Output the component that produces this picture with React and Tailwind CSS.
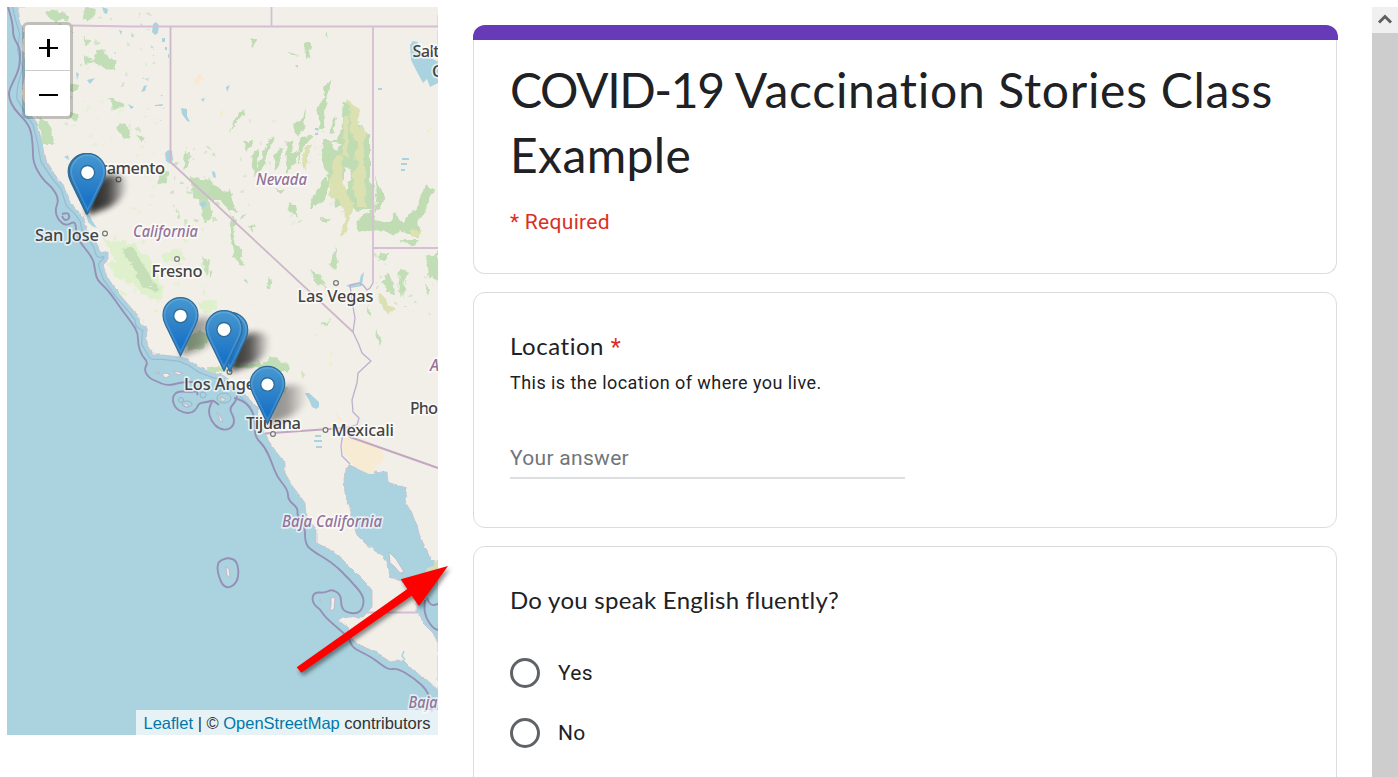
import React from "react";

const COAST =
  "M17 7L20 20 24 33 22 50 27 68 22 87 21 97 30 113 37 123 42 143 45 160 55 175 65 187 70 203 78 211 84 219 86 228 92 236 98 246 100 253 108 251 108 260 103 265 107 277 120 295 133 310 139 318 140 324 147 328 146 343 153 355 163 355 180 357 190 361 200 368 213 373 222 375 228 378 228 385 237 387 250 400 257 407 260 420 265 433 270 443 277 453 285 463 285 473 293 487 297 492 305 503 306 517 317 530 317 543 333 552 343 560 353 570 365 582 372 590 372 607 363 617 343 617 338 620 348 628 353 640 363 647 377 652 390 662 403 660 413 670 427 680 438 690V643L433 633 423 623 417 612 417 603 407 583 398 580 390 577 388 563 380 553 367 545 357 535 353 523 350 507 345 493 344 480 345 472 350 465 360 470 370 474 374 471 387 473 388 482 407 488 405 500 412 513 417 527 423 543 432 560 438 562V7Z";

const LIMITS = [
  "8 7 13 23 13 37 20 48 20 62 18 72 9 90 9 98 14 109 25 120 31 130 33 147 33 163 43 180 52 187 59 199 55 210 58 220 66 226 75 221 76 229 78 240 93 258 95 270 97 280 108 290 122 310 132 323 138 333 138 345 142 356 148 362 144 370 149 378 156 381 167 386 183 382 193 382",
  "234 398 243 400 253 411 255 425 255 437 265 447 272 463 277 477 288 490 288 500 298 508 297 516 305 526 305 541 309 549 333 563 350 580 364 596 363 608 357 614 345 612 341 606 341 595 332 589 325 593 315 592 312 598 314 605 320 609 325 617 340 630 349 638 352 647 361 652 373 658 388 670 397 668 414 678 429 692 432 712",
  "425 600 424 608 426 618 433 628 438 630",
  "427 598 430 606 438 604",
  "197 395 199 391 190 392 177 391 172 398 175 408 184 413 192 413 197 408 199 403 208 402 213 400 219 405",
  "212 402 208 409 211 421 219 429 228 430 234 425 234 417 229 409 236 401 237 396",
  "228 558 219 560 217 568 219 577 223 586 230 588 237 582 239 571 236 560 228 558",
  "62 214 68 212 70 218 65 221 62 216",
];

// Runs a curve through the midpoints of a list of points.
function smooth(list) {
  const n = list.split(" ").map(Number);
  let d = `M${n[0]} ${n[1]}`;
  for (let i = 2; i < n.length - 2; i += 2) {
    d += `Q${n[i]} ${n[i + 1]} ${(n[i] + n[i + 2]) / 2} ${(n[i + 1] + n[i + 3]) / 2}`;
  }
  return `${d}L${n[n.length - 2]} ${n[n.length - 1]}`;
}

// Vegetation outlines are given at three times the map scale, per quadrant.
const GREEN_NW =
  "M115 350L145 365 160 410 155 435 125 435 120 390ZM285 155L310 150 325 180 350 180 345 210 325 212 300 195 280 185ZM325 290L345 300 375 308 370 322 340 330ZM355 370L380 375 395 410 375 420 355 395ZM140 30L200 38 205 60 165 65 140 50ZM255 25L285 25 280 55 245 62ZM555 455L570 460 565 500 550 510ZM480 510L505 515 500 550 475 550ZM570 530L640 545 650 580 625 600 640 650 615 670 600 600 580 590ZM210 340L235 340 235 362 215 362ZM250 170L275 170 280 190 255 190ZM250 110L275 120 260 140ZM210 250L235 255 230 270 212 270ZM412 405L435 415 420 430ZM390 100L400 105 392 112Z";
const GREEN_NE =
  "M398 305L420 310 430 345 455 380 480 410 480 540 495 570 490 630 440 635 420 610 375 620 370 580 355 530 335 480 340 420 380 420 395 380ZM440 660L490 630 495 660 540 670 555 640 580 670 600 640 620 630 630 590 645 560 672 570 650 610 650 640 625 660 630 710 570 690 550 710 520 690 440 695ZM283 125L300 120 298 175 285 180ZM233 155L262 165 245 168ZM255 195L270 195 262 208ZM345 250L365 240 350 290 342 330 345 370 325 400 330 350 320 330 338 300ZM100 325L105 345 75 365 60 398 65 370ZM285 320L280 385 265 410 245 375 275 360ZM230 425L250 425 245 460 265 450 255 485 235 520 230 480ZM180 415L195 420 170 460 160 505 130 530 145 490ZM205 440L215 445 210 500 190 515 195 470ZM105 420L130 420 110 460ZM270 415L310 410 280 430 270 480 260 500ZM130 460L145 450 138 525 125 500ZM345 530L360 545 345 600 300 625 315 580ZM495 525L510 560 525 600 495 640 500 580ZM370 350L380 350 370 400 358 400ZM235 605L255 615 260 655 245 635ZM0 530L10 555 40 575 60 570 70 600 85 640 55 630 30 600 0 600ZM60 645L80 660 70 690 90 760 92 790 80 780 65 720ZM95 650L110 640 95 660ZM110 675L135 680 125 697ZM330 655L360 655 350 670ZM684 740L684 790 660 790ZM500 770L540 755 520 785ZM200 565L220 565 210 580ZM345 95L355 100 350 112ZM125 120L140 115 125 150Z";
const GREEN_SE =
  "M70 20L90 30 95 60 110 80 95 80 75 50ZM295 90L335 105 345 130 325 140ZM375 15L385 60 375 90 362 75ZM650 50L684 40 684 120 660 110 650 80ZM505 60L510 40 535 40 520 55ZM530 90L550 130 558 165 530 155 520 130ZM570 90L595 95 580 130 590 150 575 175 565 150ZM500 260L515 300 510 315 500 290ZM470 200L485 210 485 240ZM570 0L630 0 610 20ZM645 130L660 150 650 165ZM175 110L185 115 180 150 172 150ZM60 375L170 365 185 350 240 375 225 400 180 395 160 380 65 385ZM200 420L232 445 228 460 205 450ZM0 385L60 380 40 395 0 395ZM330 250L360 240 350 255ZM100 120L118 125 110 133ZM0 90L8 95 0 115Z";
const GREEN_SW =
  "M370 25L395 25 430 70 455 120 480 145 465 155 430 140 400 90 375 50ZM560 290L600 270 640 290 600 330 565 330ZM610 55L630 65 620 110 612 95ZM620 385L660 380 660 395 625 395Z";
const PALE_SW =
  "M310 0L400 10 450 60 490 150 480 185 440 170 390 130 340 110 320 70 350 65ZM595 185L650 180 650 210 620 222 600 205ZM480 45L530 25 560 60 500 65Z";

const LABELS = [
  { t: "Sacramento", x: 76, y: 173.5, w: 89 },
  { t: "San Jose", x: 35, y: 241, w: 64 },
  { t: "Fresno", x: 151.5, y: 276.5, w: 51 },
  { t: "Las Vegas", x: 297.5, y: 302, w: 76 },
  { t: "Los Angeles", x: 184, y: 390, w: 93 },
  { t: "Tijuana", x: 246, y: 429, w: 55 },
  { t: "Mexicali", x: 331.5, y: 435.5, w: 62.5 },
  { t: "Salt", x: 412.5, y: 56.5, w: 27 },
  { t: "C", x: 432, y: 77, w: 10 },
  { t: "Pho", x: 410, y: 414, w: 28 },
];

const REGIONS = [
  { t: "Nevada", x: 256, y: 185, w: 51 },
  { t: "California", x: 133, y: 237, w: 65 },
  { t: "Baja California", x: 282, y: 527, w: 100 },
  { t: "A", x: 430, y: 371, w: 9 },
  { t: "Baja", x: 408.5, y: 708, w: 29 },
];

const TOWNS = [[118.5, 179.5], [105, 233.5], [177, 259], [336, 283], [229.5, 372], [273, 434], [325.5, 430]];

const PINS = [
  { x: 86.3, y: 214.5, s: 1.5, shade: 0.45 },
  { x: 87.6, y: 214.5, s: 1.5, shade: 0.7 },
  { x: 180.5, y: 356.5, s: 1.45, shade: 0.42 },
  { x: 230, y: 372, s: 1.47, shade: 0.8 },
  { x: 224, y: 371.5, s: 1.5, shade: 0 },
  { x: 267.5, y: 424.5, s: 1.43, shade: 0.42 },
];

// Small deterministic scatter for ground cover.
function scatter(seed, n, x0, y0, w, h, size) {
  let s = seed;
  const rnd = () => {
    s = (s * 16807) % 2147483647;
    return s / 2147483647;
  };
  return Array.from({ length: n }, () => ({
    x: x0 + rnd() * w,
    y: y0 + rnd() * h,
    rx: 0.5 + rnd() * size,
    ry: 0.5 + rnd() * size,
  }));
}

const SPECKS = [
  { c: "#d3e5c9", d: scatter(41, 40, 50, 12, 105, 120, 1.4) },
  { c: "#e6f0d8", d: scatter(97, 50, 70, 100, 90, 120, 2) },
  { c: "#b9dae2", d: scatter(7, 12, 75, 20, 95, 110, 0.9) },
  { c: "#cfe3c3", d: scatter(313, 34, 172, 145, 50, 80, 1.7) },
  { c: "#d9e6d0", d: scatter(505, 22, 240, 110, 110, 115, 1.2) },
  { c: "#e2f0d0", d: scatter(77, 44, 115, 225, 90, 100, 2.2) },
  { c: "#eeeed9", d: scatter(811, 20, 215, 270, 130, 140, 1) },
  { c: "#d3e4c8", d: scatter(631, 18, 375, 255, 62, 60, 1.4) },
];

function Pin({ x, y, s }) {
  return (
    <g transform={`translate(${x - 12.5 * s} ${y - 41 * s}) scale(${s})`}>
      <path
        d="M12.5.4C5.8.4.4 5.8.4 12.5c0 2.5.8 4.7 1.8 6.8L12.5 40.6l10.300-21.300c1-2.100 1.800-4.300 1.800-6.800C24.600 5.800 19.200.4 12.500.4Z"
        fill="url(#pinFill)"
        stroke="#2e6c97"
        strokeWidth=".8"
      />
      <path
        d="M12.500 1.500C6.400 1.500 1.500 6.400 1.500 12.500c0 2.300.8 4.400 1.700 6.300L12.500 38l9.300-19.200c.9-1.900 1.700-4 1.700-6.300 0-6.100-4.900-11-11-11Z"
        fill="none"
        stroke="#fff"
        strokeOpacity=".14"
        strokeWidth="1.100"
      />
      <circle cx="12.500" cy="13" r="4.700" fill="#fff" stroke="#2e6c97" strokeWidth=".9" />
    </g>
  );
}

function MapCanvas() {
  return (
    <svg className="block h-[728px] w-[431px]" viewBox="7 7 431 728" aria-label="Map">
      <defs>
        <linearGradient id="pinFill" x1="0" y1="0" x2="0" y2="1">
          <stop offset="0" stopColor="#4699d2" />
          <stop offset=".35" stopColor="#3587c9" />
          <stop offset=".8" stopColor="#1873c8" />
          <stop offset="1" stopColor="#2578c0" />
        </linearGradient>
        <linearGradient id="shadeFill" x1="0" y1="0" x2="1" y2="0">
          <stop offset="0" stopColor="#000" />
          <stop offset=".5" stopColor="#000" stopOpacity=".8" />
          <stop offset="1" stopColor="#000" stopOpacity="0" />
        </linearGradient>
        <filter id="rough" x="-5%" y="-5%" width="110%" height="110%">
          <feTurbulence type="fractalNoise" baseFrequency=".13" numOctaves="3" seed="4" />
          <feDisplacementMap in="SourceGraphic" scale="7" xChannelSelector="R" yChannelSelector="G" />
          <feGaussianBlur stdDeviation=".6" />
        </filter>
        <filter id="shoreline" x="-5%" y="-5%" width="110%" height="110%">
          <feTurbulence type="fractalNoise" baseFrequency=".16" numOctaves="2" seed="9" />
          <feDisplacementMap in="SourceGraphic" scale="3.500" xChannelSelector="R" yChannelSelector="G" />
          <feGaussianBlur stdDeviation=".35" />
        </filter>
        <filter id="soft" x="-50%" y="-50%" width="200%" height="200%">
          <feGaussianBlur stdDeviation="3.200" />
        </filter>
        <filter id="line" x="-5%" y="-5%" width="110%" height="110%">
          <feGaussianBlur stdDeviation=".4" />
        </filter>
        <clipPath id="land">
          <path d={COAST} />
        </clipPath>
        <clipPath id="north">
          <rect x="7" y="7" width="420" height="400" />
        </clipPath>
      </defs>
      <rect x="7" y="7" width="431" height="728" fill="#aad3df" />

      <g clipPath="url(#north)">
        <g filter="url(#line)">
          <path d={COAST} fill="none" stroke="#93b2d0" strokeOpacity=".75" strokeWidth="10" strokeLinejoin="round" />
          <path d={COAST} fill="#aad3df" stroke="#aad3df" strokeWidth="7.500" strokeLinejoin="round" />
        </g>
      </g>
      <path d={COAST} fill="#f2efe9" stroke="#c3bfd0" strokeWidth=".8" filter="url(#shoreline)" />
      <rect x="431" y="80" width="7" height="480" fill="#f2efe9" />
      <rect x="25" y="7" width="413" height="8" fill="#f2efe9" />

      <g clipPath="url(#land)">
        <g filter="url(#rough)">
          <g transform="translate(0 240) scale(.33333)">
            <path d={PALE_SW} fill="#dff0cc" />
            <path d={GREEN_SW} fill="#c5dfb8" />
          </g>
          {SPECKS.map((g, i) => (
            <g key={i} fill={g.c}>
              {g.d.map((p, j) => (
                <ellipse key={j} cx={p.x} cy={p.y} rx={p.rx} ry={p.ry} />
              ))}
            </g>
          ))}
          <path transform="scale(.33333)" d={GREEN_NW} fill="#c2deb6" />
          <g transform="translate(210 0) scale(.33333)">
            <path d={GREEN_NE} fill="#bfdcb3" />
            <path
              d="M408 300L445 325 445 375 468 395 460 430 465 480 465 570 470 625 445 620 435 580 425 530 445 490 430 470 445 430 420 400 425 345ZM375 470L395 460 395 520 405 560 420 600 430 610 410 700 398 705 405 650 390 600 355 590 360 550ZM285 435L305 435 295 475 285 510 275 490ZM400 350L418 350 415 480 400 470ZM605 690L635 690 625 710 605 705Z"
              fill="#dbe1b0"
            />
            <path d="M365 425L395 430 380 455 365 450ZM405 500L425 510 410 570 400 560Z" fill="#f2efe9" />
            <path d="M650 390L665 385 655 402ZM30 325L42 335 32 350Z" fill="#f6ecc4" />
          </g>
          <g transform="translate(210 240) scale(.33333)">
            <path d={GREEN_SE} fill="#c2deb6" />
            <path d="M500 165L525 170 555 210 535 225 505 190ZM280 390L290 400 280 420ZM335 125L350 140 340 150Z" fill="#dbe1b5" />
            <path d="M365 500L400 545 385 535ZM355 365L365 370 358 388ZM315 280L325 285 318 290ZM360 335L375 337 362 342Z" fill="#f7e8c6" />
          </g>
          <path d="M193 80L202 73 204 78 197 84ZM22 87L26 97 23 100Z" fill="#f7ead0" />
        </g>
        <g fill="#aad3df" filter="url(#line)">
          <path d="M153 24L156 22 159 25 158 33 155 35 152 32ZM181 108L187 109 187 116 190 122 187 121 182 114ZM165 153L168 150 172 151 173 160 170 164 166 161ZM144 86L147 85 145 91 141 92ZM87 80L95 78 90 84ZM128 104L134 107 131 109ZM155 105L163 104 162 106 155 106ZM162 38L165 38 165 42 162 42ZM168 54h1v4h-1zM165 47h2v3h-2zM201 99L205 98 203 102ZM199 204L204 201 207 204 203 208ZM212 171L215 172 216 178 213 177ZM102 7L108 9 107 14 104 13ZM119 30L122 31 121 35ZM64 157L68 155 69 160ZM76 72L79 74 77 80Z" />
          <path d="M410 45L413 41 418 42 420 58 430 57 438 62V83L430 87 427 79 423 83 416 70 411 60Z" />
          <path d="M305 393L309 393 319 402 319 407 316 409 312 407 309 400ZM346 285L362 284 362 286 350 288ZM361 275L364 272 362 285 359 284ZM226 87L230 85 227 92ZM86 213L90 216 93 222 97 228 92 226 88 222Z" />
        </g>
        <path d="M402 159h7M401 164h6M401 170h4M315 129h3M315 134h3M378 89h4M315 436h6M314 441h8M316 447h6" stroke="#aad3df" strokeWidth="2.200" />
        <path d="M404 651L402 656 405 660" stroke="#aad3df" strokeWidth="1.500" fill="none" />
      </g>
      <path d="M344 438L366 440 374 445 384 452 383 461 375 466 374 474 369 474 358 469 351 463 343 451Z" fill="#f7ebd3" filter="url(#line)" />

      <g fill="none" stroke="#d6bfd4" strokeWidth="1.800" strokeLinejoin="round" filter="url(#line)">
        <path d="M72 25.500L130 26.500H438M271.500 7V26M373 27V283M373 248H438M365 612.500H417" />
        <path d="M170.500 27V162L353 332" stroke="#cdb8ca" />
        <path
          d="M373 283L370 288 367 290 363 285 359 283 350 285 351 293 353 307 355 318 353 332 359 345 362 353 371 361 358 373 357 383 352 400 353 412 359 418 357 425 344 428 341 446 342 456 350 464"
          stroke="#bcb0cd"
          strokeWidth="1.300"
        />
        <path d="M265 433.500L315 430 344 428 350 437 438 468" stroke="#c2a7c2" strokeWidth="2.200" />
      </g>

      <g fill="none" stroke="#9690b6" strokeWidth="1.900" strokeLinejoin="round" filter="url(#line)">
        {LIMITS.map((l) => (
          <path key={l} d={smooth(l)} />
        ))}
      </g>
      <g fill="none" stroke="#93b2d0" strokeWidth="1" filter="url(#line)">
        <circle cx="181" cy="400" r="2.500" />
        <circle cx="203" cy="395" r="3" />
        <ellipse cx="224" cy="398" rx="7" ry="5" />
        <ellipse cx="187" cy="404" rx="5" ry="3" />
      </g>
      <g fill="#f2efe9" stroke="#bbb2c6" strokeWidth=".8">
        <path d="M155 372l5 1-4 1zM162 374l5-1 3 3-5 2zM173 371l10 2-5 2zM182 402l7 4-3 1zM217 412l6 9h-3zM226 567l3 2 1 9-3-3zM331 598l4-1-1 12-4 2 1-6zM389 552l7 7 8 13-4 1-6-7-4-3zM319 600h2v2z" />
        <path d="M220 397l6 2-4 3z" fill="#deedc6" />
      </g>
      <path d="M427 568L434 566V561H438V575L426 573Z" fill="#d3dfb6" />

      <g fill="#f4f2ed" stroke="#777" strokeWidth="1.200">
        {TOWNS.map(([x, y]) => (
          <circle key={x} cx={x} cy={y} r="2.400" />
        ))}
      </g>
      <g
        className="font-['Noto_Sans',sans-serif] text-[16.5px] font-medium"
        fill="#444"
        stroke="#fff"
        strokeOpacity=".65"
        strokeWidth="3.500"
        strokeLinejoin="round"
        paintOrder="stroke"
      >
        {LABELS.map((l) => (
          <text key={l.t} x={l.x} y={l.y} textLength={l.w}>
            {l.t}
          </text>
        ))}
      </g>
      <g
        className="font-['Noto_Sans',sans-serif] text-[15.5px] font-medium italic"
        fill="#93739a"
        stroke="#fff"
        strokeOpacity=".65"
        strokeWidth="3.500"
        strokeLinejoin="round"
        paintOrder="stroke"
      >
        {REGIONS.map((l) => (
          <text key={l.t} x={l.x} y={l.y} textLength={l.w} lengthAdjust="spacingAndGlyphs">
            {l.t}
          </text>
        ))}
      </g>

      {PINS.map((p, i) => (
        <path
          key={i}
          d="M0 0L4-24C8-38 26-44 38-36 44-28 36-14 20-7Z"
          transform={`translate(${p.x} ${p.y})`}
          fill="url(#shadeFill)"
          opacity={p.shade}
          filter="url(#soft)"
        />
      ))}
      {PINS.map((p, i) => (
        <Pin key={i} {...p} />
      ))}
    </svg>
  );
}

function ZoomControl() {
  return (
    <div className="absolute top-[15px] left-[15px] flex w-[51px] flex-col overflow-hidden rounded-[6px] border-3 border-black/20 bg-white bg-clip-padding">
      <button aria-label="Zoom in" className="flex h-[46px] items-center justify-center border-b border-[#ccc]">
        <svg className="ml-[2px] h-5 w-5" viewBox="0 0 20 20" shapeRendering="crispEdges">
          <path d="M0 9h19v2H0zM8 1h3v18H8z" />
        </svg>
      </button>
      <button aria-label="Zoom out" className="flex h-[45px] items-center justify-center">
        <svg className="ml-[2px] h-5 w-5" viewBox="0 0 20 20" shapeRendering="crispEdges">
          <path d="M0 10h19v2H0z" />
        </svg>
      </button>
    </div>
  );
}

function MapPanel() {
  return (
    <section className="relative mt-[7px] ml-[7px] h-[728px] w-[431px] shrink-0">
      <MapCanvas />
      <ZoomControl />
      <div className="absolute right-0 bottom-0 h-[25px] w-[302px] bg-white/70 pl-[7.5px] font-['Liberation_Sans',Arial,sans-serif] text-[16.5px] leading-[26px] whitespace-nowrap text-[#333]">
        <a className="text-[#0078a8]">Leaflet</a> | © <a className="text-[#0078a8]">OpenStreetMap</a> contributors
      </div>
      <svg
        className="absolute top-[545px] left-[280px] h-[135px] w-[175px] drop-shadow-[2px_3px_2px_rgba(0,0,0,0.45)]"
        viewBox="287 552 175 135"
      >
        <path d="M448 566L400.700 579.300 407.300 589 296.700 667.300 301.300 672.700 411.700 595.700 419 606Z" fill="#f00" />
      </svg>
    </section>
  );
}

function Option({ label }) {
  return (
    <label className="flex h-[30px] items-center gap-[18px] text-[21px] tracking-[0.3px] text-[#202124]">
      <span className="h-[30px] w-[30px] rounded-full border-3 border-[#5f6368]" />
      <span className="pt-[2px]">{label}</span>
    </label>
  );
}

function FormPanel() {
  return (
    <main className="ml-[35px] flex w-[865px] shrink-0 flex-col pt-[25px] font-[Roboto,sans-serif] text-[#202124]">
      <div className="h-[15px] w-[865px] shrink-0 rounded-t-[12px] bg-[#673ab7]" />
      <section className="h-[234px] w-[864px] shrink-0 rounded-b-[12px] border border-t-0 border-[#dadce0] px-9 pt-[17px]">
        <h1 className="font-[Lato,sans-serif] text-[48px] leading-[65px] tracking-[0.7px] whitespace-nowrap [font-variant-ligatures:none]">
          <span className="tracking-[-1.4px]">COVID-19</span> Vaccination Stories Class
          <br />
          <span className="tracking-[0.4px]">Example</span>
        </h1>
        <p className="mt-[22px] text-[21px] leading-[26px] tracking-[0.3px] text-[#d93025]">* Required</p>
      </section>
      <section className="mt-[18px] h-[236px] w-[864px] shrink-0 rounded-[12px] border border-[#dadce0] px-9 pt-[35px]">
        <h2 className="h-9 font-[Lato,sans-serif] text-[24px] leading-9 tracking-[0.55px] [font-variant-ligatures:none]">
          Location <span className="font-[Roboto,sans-serif] text-[23px] text-[#d93025]">*</span>
        </h2>
        <p className="mt-[7px] text-[18px] leading-6 tracking-[0.45px]">This is the location of where you live.</p>
        <div className="mt-[45px] h-[39px] w-[395px] border-b-2 border-[#dcdedf] text-[21px] leading-[37px] tracking-[0.3px] text-[#70757a]">
          Your answer
        </div>
      </section>
      <section className="mt-[18px] h-[300px] w-[864px] shrink-0 rounded-t-[12px] border border-[#dadce0] px-9 pt-[35px]">
        <h2 className="font-[Lato,sans-serif] text-[24px] leading-9 tracking-[0.28px] [font-variant-ligatures:none]">
          Do you speak English fluently?
        </h2>
        <div className="mt-[40px] flex flex-col gap-[30px]">
          <Option label="Yes" />
          <Option label="No" />
        </div>
      </section>
    </main>
  );
}

function ScrollBar() {
  return (
    <aside className="mt-[7px] ml-auto flex w-[26px] shrink-0 flex-col bg-[#cdcdcd]">
      <div className="flex h-[26px] items-center justify-center bg-[#f0f0f0]">
        <svg className="h-[26px] w-[26px]" viewBox="0 0 26 26">
          <path d="M7 15.500L13 9.500 19 15.500" fill="none" stroke="#606060" strokeWidth="3" />
        </svg>
      </div>
    </aside>
  );
}

export default function App() {
  return (
    <div className="flex h-[777px] w-full overflow-hidden bg-white">
      <MapPanel />
      <FormPanel />
      <ScrollBar />
    </div>
  );
}
